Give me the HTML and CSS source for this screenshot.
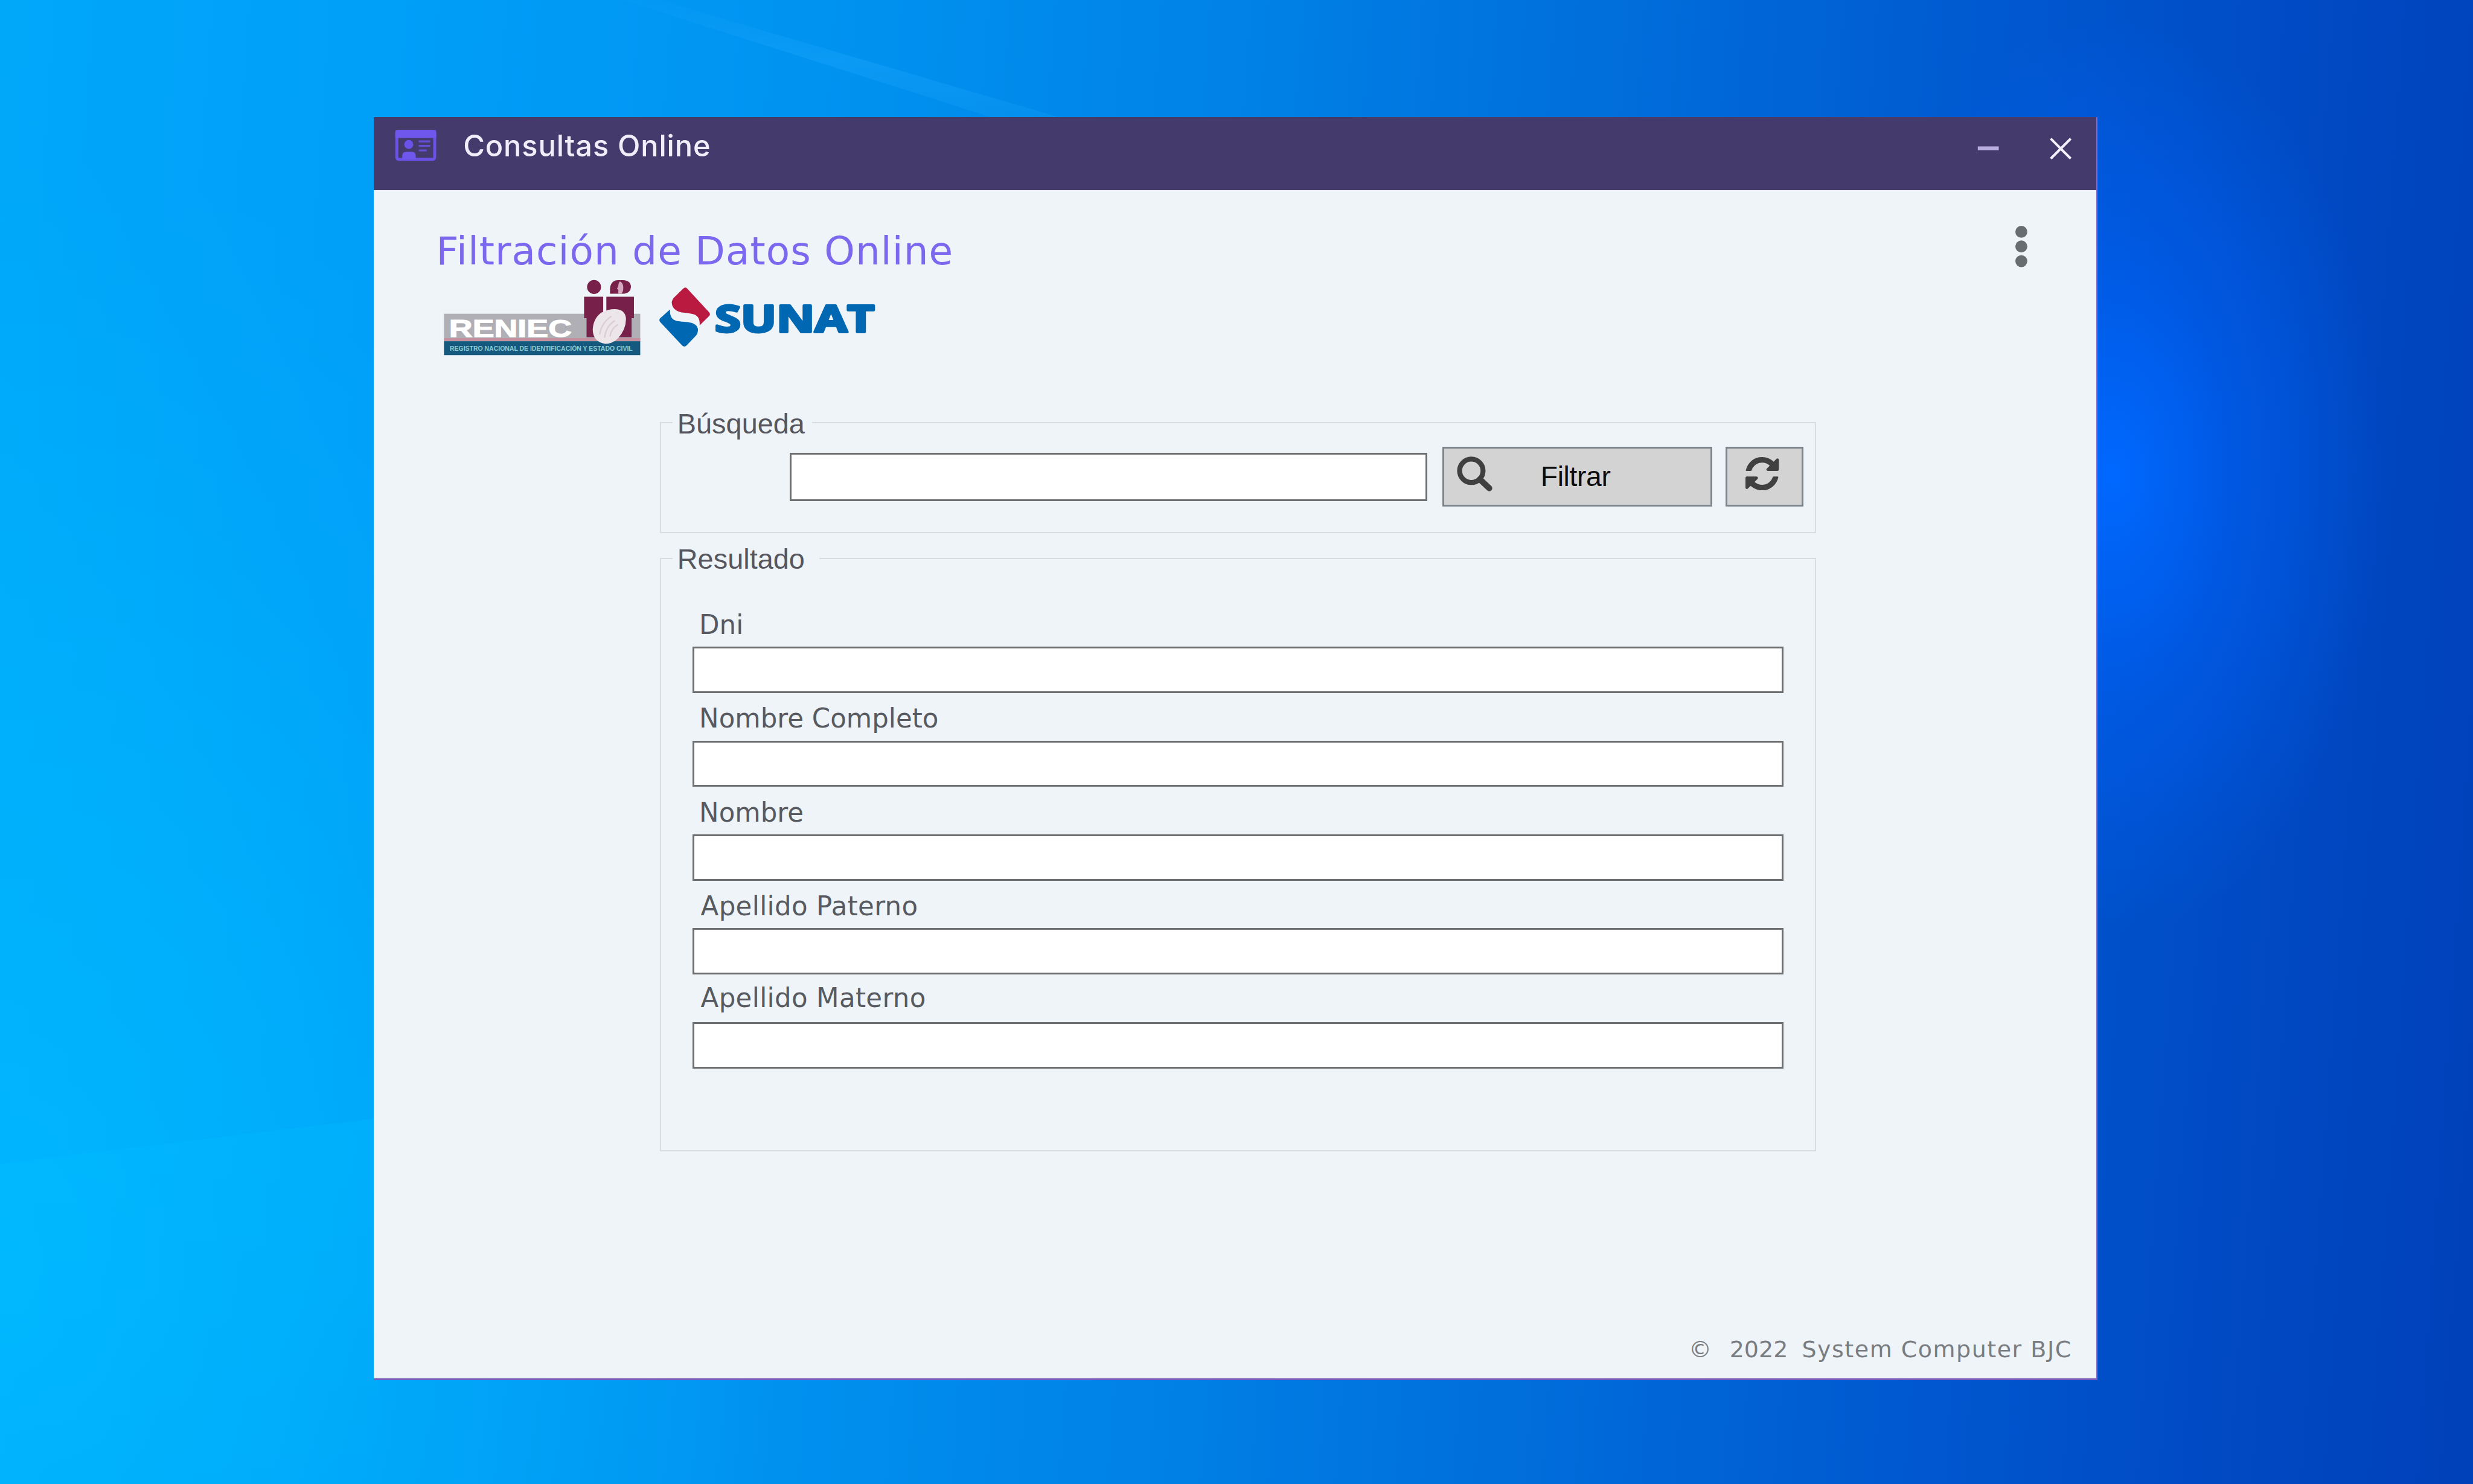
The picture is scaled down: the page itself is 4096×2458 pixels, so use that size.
FILE: index.html
```html
<!DOCTYPE html>
<html lang="es">
<head>
<meta charset="utf-8">
<title>Consultas Online</title>
<link rel="stylesheet" href="styles.css">
</head>
<body class="desktop">
<svg class="wallpaper-rays" viewBox="0 0 1568 941" preserveAspectRatio="none" aria-hidden="true">
  <defs>
    <linearGradient id="ray" x1="0.600" y1="0" x2="0.400" y2="1">
      <stop offset="0" stop-color="#22aaff" stop-opacity="0"/>
      <stop offset=".5" stop-color="#22aaff" stop-opacity=".32"/>
      <stop offset="1" stop-color="#22aaff" stop-opacity=".1"/>
    </linearGradient>
    <linearGradient id="floor" x1="0" y1="0" x2="0" y2="1">
      <stop offset="0" stop-color="#00c4ff" stop-opacity=".2"/>
      <stop offset="1" stop-color="#00c4ff" stop-opacity="0"/>
    </linearGradient>
  </defs>
  <path d="M395 0H418L684 78H640Z" fill="url(#ray)"/>
  <path d="M0 738L240 709V941H0Z" fill="url(#floor)"/>
</svg>
<main class="window">
  <header class="titlebar">
    <svg class="app-icon" viewBox="0 0 110 90" aria-hidden="true">
      <rect x="16" y="13" width="76" height="56" rx="4" fill="none" stroke="#6a52e8" stroke-width="6"/>
      <path d="M13 14Q13 10 17 10H91Q95 10 95 14V26H13Z" fill="#6f57ee"/>
      <circle cx="40" cy="39" r="9" fill="#6a52e8"/>
      <path d="M27 69V62Q27 54 35 54H46Q54 54 54 62V69Z" fill="#6f57ee"/>
      <path d="M60 33H83M60 42H83M60 51H76" stroke="#6450d4" stroke-width="4"/>
    </svg>
    <h1 class="title">Consultas Online</h1>
    <div class="controls">
      <svg class="control" viewBox="0 0 44 44"><path d="M1 21.500H43" stroke="#b9addd" stroke-width="8"/></svg>
      <svg class="control" viewBox="0 0 44 44"><path d="M2 2L42 42M42 2L2 42" stroke="#f4f0ff" stroke-width="5"/></svg>
    </div>
  </header>

  <section class="content">
    <div class="heading">
      <h2 class="heading-text">Filtración de Datos Online</h2>
      <svg class="menu" viewBox="0 0 24 84" fill="#686d70"><circle cx="12" cy="12" r="12"/><circle cx="12" cy="41.500" r="12"/><circle cx="12" cy="71" r="12"/></svg>
    </div>
    <div class="logos">
      <svg class="reniec" viewBox="0 0 1290 540">
        <rect x="63" y="235" width="1181" height="165" fill="#b1afb6"/>
        <rect x="63" y="382" width="1181" height="18" fill="#c78f9f"/>
        <rect x="63" y="400" width="1181" height="84" fill="#155a7e"/>
        <g fill="#77204a">
          <circle cx="966" cy="74" r="42"/>
          <path d="M1062 114V84Q1066 34 1110 33H1140Q1188 36 1188 74Q1186 110 1148 114Z"/>
          <path d="M906 133H1021V376H921V262H906Z"/>
          <path d="M1040 133H1206V262H1192V376H1040Z"/>
        </g>
        <path d="M1122 40Q1142 50 1142 78Q1142 104 1130 114H1112V92L1104 84L1112 70Q1112 50 1122 40Z" fill="#d5a9c0"/>
        <path d="M1090 207Q1152 207 1158 262Q1160 330 1110 382Q1075 418 1032 416Q960 404 958 330Q962 262 1010 228Q1050 207 1090 207Z" fill="#ece6ea"/>
        <path d="M1000 360Q1010 290 1070 250M1030 380Q1036 310 1092 276M1062 372Q1070 320 1112 300" fill="none" stroke="#dccbd4" stroke-width="8"/>
        <text x="94" y="373" class="reniec-name" textLength="738" lengthAdjust="spacingAndGlyphs">RENIEC</text>
        <text x="98" y="458" class="reniec-sub" textLength="1100" lengthAdjust="spacingAndGlyphs">REGISTRO NACIONAL DE IDENTIFICACIÓN Y ESTADO CIVIL</text>
      </svg>
      <svg class="sunat" viewBox="0 0 1440 450">
        <path d="M222 48Q228 48 236 57L366 198Q374 209 366 219L308 276Q312 218 268 208Q238 200 200 198Q142 186 140 138Q142 120 156 106L208 55Q216 48 222 48Z" fill="#bb1a40"/>
        <path d="M130 180Q126 240 172 250Q200 254 236 256Q296 264 298 302Q298 326 284 340L230 396Q216 410 202 396L70 255Q62 243 70 233Z" fill="#0067b2"/>
        <text x="400" y="315" class="sunat-name" textLength="960" lengthAdjust="spacingAndGlyphs">SUNAT</text>
      </svg>
    </div>

    <fieldset class="group search">
      <legend class="legend">Búsqueda</legend>
      <div class="search-row">
        <input class="box query" type="text" aria-label="Búsqueda">
        <button class="button filter" type="button">
          <svg class="icon-search" viewBox="0 0 74 72" fill="none" stroke="#404040"><circle cx="29" cy="30" r="23.500" stroke-width="10"/><path d="M46 47L65 65" stroke-width="12" stroke-linecap="round"/></svg>
          <span>Filtrar</span>
        </button>
        <button class="button refresh" type="button" aria-label="Actualizar">
          <svg class="icon-refresh" viewBox="0 0 1536 1536" fill="#404040"><path d="M1511 928q0 5-1 7-64 268-268 434.500t-478 166.500q-146 0-282.500-55t-243.500-157l-129 129q-19 19-45 19t-45-19-19-45v-448q0-26 19-45t45-19h448q26 0 45 19t19 45-19 45l-137 137q71 66 161 102t187 36q134 0 250-65t186-179q11-17 53-117 8-23 30-23h192q13 0 22.500 9.500t9.500 22.500zm25-800v448q0 26-19 45t-45 19h-448q-26 0-45-19t-19-45 19-45l138-138q-148-137-349-137-134 0-250 65t-186 179q-11 17-53 117-8 23-30 23h-199q-13 0-22.500-9.500t-9.500-22.500v-7q65-268 270-434.500t480-166.500q146 0 284 55.500t245 156.500l130-129q19-19 45-19t45 19 19 45z"/></svg>
        </button>
      </div>
    </fieldset>

    <fieldset class="group result">
      <legend class="legend legend-wide">Resultado</legend>
      <div class="fields">
        <label class="field"><span class="label">Dni</span><input class="box" type="text"></label>
        <label class="field"><span class="label">Nombre Completo</span><input class="box" type="text"></label>
        <label class="field"><span class="label">Nombre</span><input class="box" type="text"></label>
        <label class="field"><span class="label label-a">Apellido Paterno</span><input class="box" type="text"></label>
        <label class="field"><span class="label label-a label-last">Apellido Materno</span><input class="box" type="text"></label>
      </div>
    </fieldset>
  </section>

  <footer class="footer"><span>©</span><span>2022</span><span class="company">System Computer BJC</span></footer>
</main>
</body>
</html>
```
FILE: styles.css
```css
/* 1rem is 1/49.6 of the screen width, so the whole desktop scales together */
html {
  font-size: calc(100vw / 49.6);
}

* {
  box-sizing: border-box;
}

.desktop {
  margin: 0;
  height: 100vh;
  overflow: hidden;
  padding: 2.35rem 0 0 7.5rem;
  background:
    radial-gradient(ellipse 11% 31% at 85.5% 32%, rgba(0, 104, 255, 1), rgba(0, 98, 250, .55) 42%, rgba(0, 84, 225, 0) 100%),
    radial-gradient(ellipse 32% 75% at 0% 85%, rgba(0, 188, 255, .75), rgba(0, 184, 255, 0) 100%),
    linear-gradient(94deg, #00a8fa 0%, #009ff8 15%, #0093f0 32%, #0082e6 48%, #006cda 64%, #0058d0 78%, #004cc6 88%, #0040b8 100%);
}

.wallpaper-rays {
  position: absolute;
  inset: 0;
  width: 100%;
  height: 100%;
}

.window {
  position: relative;
  width: 34.57rem;
  height: 25.33rem;
  display: flex;
  flex-direction: column;
  background: #eff4f9;
  border-right: .03rem solid #8a6cc4;
  border-bottom: .04rem solid #7a5cba;
}

/* Title bar */
.titlebar {
  flex: none;
  height: 1.46rem;
  padding: 0 .5rem .29rem .3rem;
  display: flex;
  align-items: center;
  background: #443b6c;
}

.app-icon {
  width: 1.1rem;
  height: .9rem;
  margin-top: .04rem;
}

.title {
  margin: 0 0 0 .39rem;
  font: 500 .59rem/.8rem Inter, "Liberation Sans", sans-serif;
  letter-spacing: .011rem;
  color: #f1eefb;
}

.controls {
  margin: .08rem 0 0 auto;
  display: flex;
  gap: 1.01rem;
}

.control {
  width: .44rem;
  height: .44rem;
}

/* Heading and logos */
.content {
  flex: 1;
}

.heading {
  display: flex;
  justify-content: space-between;
  padding: .757rem 1.38rem 0 1.25rem;
}

.heading-text {
  margin: 0;
  font: 400 .78rem/.94rem Verdana, "DejaVu Sans", sans-serif;
  letter-spacing: .0125rem;
  color: #7b68ee;
}

.menu {
  width: .24rem;
  height: .84rem;
  margin-top: -.04rem;
}

.logos {
  display: flex;
  padding-left: 1.2rem;
  height: 2.673rem;
}

.reniec {
  width: 4.3rem;
  height: 1.8rem;
}

.sunat {
  width: 4.8rem;
  height: 1.5rem;
  margin-top: .1rem;
}

.reniec-name {
  font: 700 148px "Liberation Sans", sans-serif;
  fill: #fff;
  stroke: #fff;
  stroke-width: 4px;
}

.reniec-sub {
  font: 700 38px "Liberation Sans", sans-serif;
  fill: #8ccbd2;
}

.sunat-name {
  font: 700 222px "Open Sans", sans-serif;
  fill: #0067b2;
  stroke: #0067b2;
  stroke-width: 14px;
  stroke-linejoin: round;
}

/* Group boxes */
.group {
  width: 23.18rem;
  margin: 0 0 0 5.74rem;
  padding: 0;
  border: .035rem solid #d6dce0;
}

.legend {
  margin-left: .23rem;
  padding: .04rem .15rem 0 .09rem;
  font: 400 .568rem/.56rem "Liberation Sans", Arial, sans-serif;
  color: #55565e;
}

.legend-wide {
  padding-right: .29rem;
}

.search {
  height: 2.51rem;
}

.result {
  height: 12.19rem;
  margin-top: .21rem;
}

.box {
  display: block;
  width: 100%;
  height: .93rem;
  padding: 0 .1rem;
  border: .04rem solid #6d6e70;
  border-radius: 0;
  background: #fff;
}

.search-row {
  display: flex;
  align-items: flex-start;
  padding: .18rem 0 0 2.57rem;
}

.query {
  width: 12.79rem;
  height: .97rem;
  margin-top: .12rem;
}

.button {
  display: flex;
  align-items: center;
  height: 1.2rem;
  padding: 0;
  border: .04rem solid #7c858b;
  border-radius: 0;
  background: #d3d3d3;
  font: 400 .56rem/1 "Liberation Sans", Arial, sans-serif;
  color: #0c0c0c;
}

.filter {
  width: 5.42rem;
  margin-left: .3rem;
  padding-left: .26rem;
}

.filter span {
  letter-spacing: -.004rem;
}

.icon-search {
  width: .74rem;
  height: .72rem;
  margin: 0 .94rem .12rem 0;
}

.refresh {
  width: 1.57rem;
  margin-left: .26rem;
  justify-content: center;
}

.icon-refresh {
  width: .67rem;
  height: .67rem;
  margin: 0 .08rem .12rem 0;
}

/* Result fields */
.fields {
  display: flex;
  flex-direction: column;
  gap: .223rem;
  padding: .74rem .62rem 0;
}

.field {
  display: block;
}

.label {
  display: block;
  margin-bottom: .13rem;
  padding-left: .14rem;
  font: 400 .527rem/.6rem Verdana, "DejaVu Sans", sans-serif;
  color: #575a60;
}

.label-a {
  padding-left: .17rem;
  letter-spacing: .004rem;
}

.label-last {
  margin: -.05rem 0 .18rem;
}

/* Footer */
.footer {
  display: flex;
  justify-content: flex-end;
  padding: 0 .49rem .3rem 0;
  font: 400 .46rem/.56rem Verdana, "DejaVu Sans", sans-serif;
  color: #797d81;
}

.footer span + span {
  margin-left: .36rem;
}

.footer .company {
  margin-left: .28rem;
  letter-spacing: .0185rem;
}
```
